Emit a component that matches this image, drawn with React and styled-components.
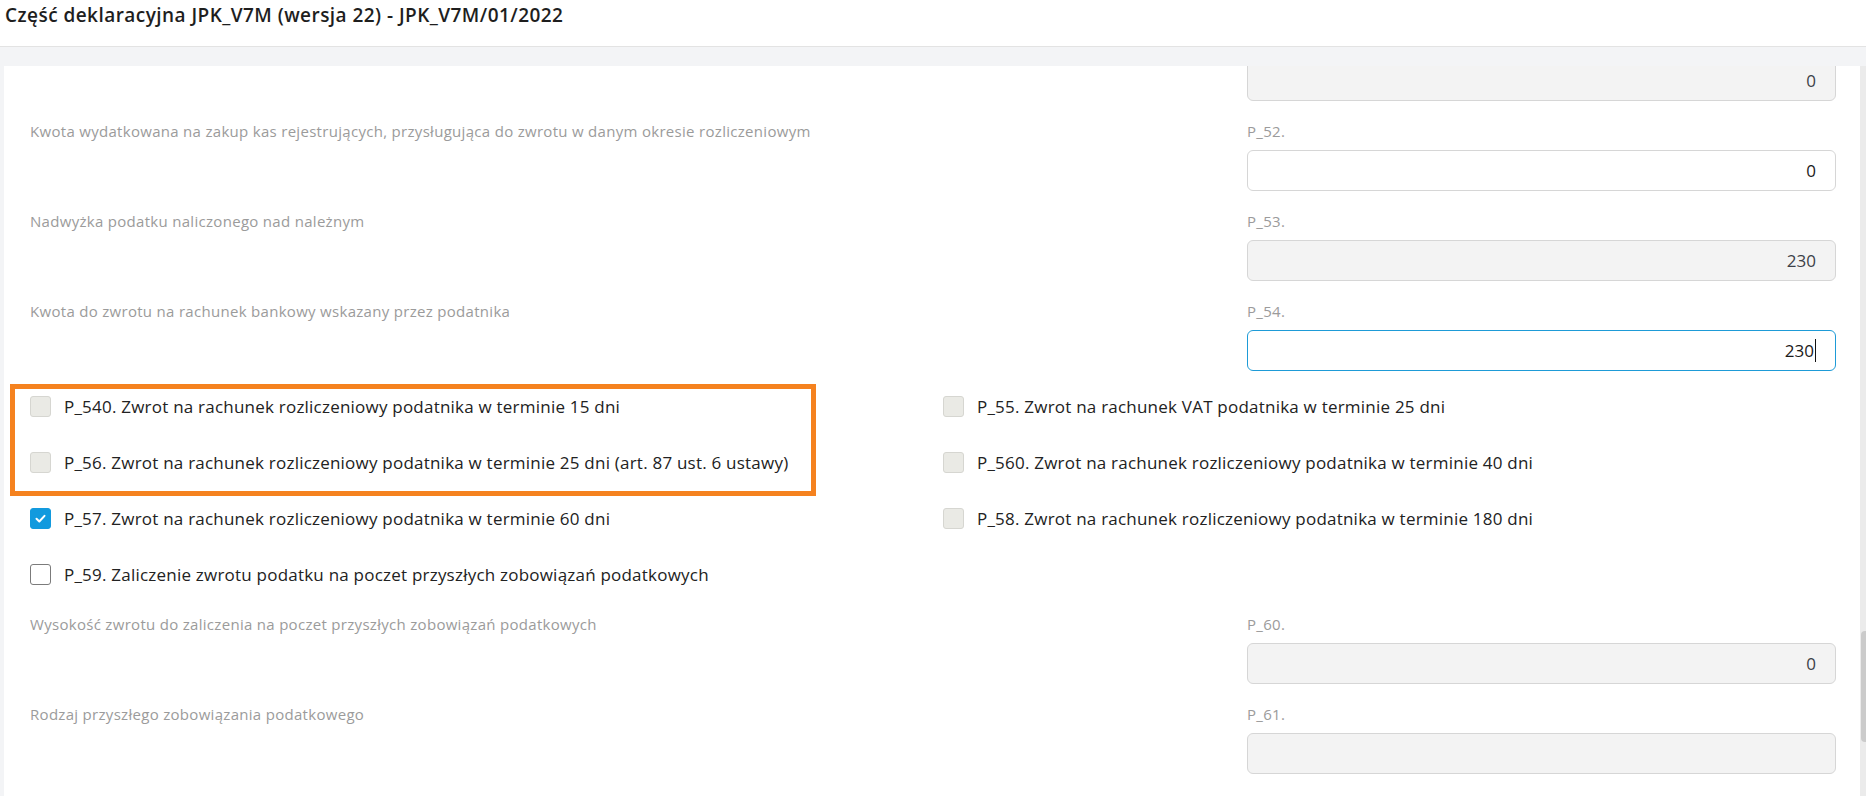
import React, { useLayoutEffect, useRef } from 'react';
import styled, { createGlobalStyle } from 'styled-components';

const GlobalStyle = createGlobalStyle`
    html, body {
        margin: 0;
        padding: 0;
        height: 100%;
    }
    body {
        font-family: "Open Sans", "Noto Sans", sans-serif;
        color: #222;
        background: #fff;
    }
    #root {
        height: 100%;
    }
`

const Page = styled.div`
    height: 100vh;
    display: flex;
    flex-direction: column;
    overflow: hidden;
`

const Header = styled.header`
    height: 47px;
    flex-shrink: 0;
    box-sizing: border-box;
    border-bottom: 1px solid #e3e3e3;
    padding: 3px 0 0 5px;
`

const Title = styled.h1`
    margin: 0;
    font-size: 19px;
    line-height: 25px;
    font-weight: 600;
    letter-spacing: 0.45px;
    color: #1e1e1e;
`

const Body = styled.div`
    flex: 1;
    min-height: 0;
    display: flex;
    background: #f3f4f6;
    padding: 19px 0 0 4px;
`

const Card = styled.div`
    flex: 1;
    min-width: 0;
    background: #fff;
    overflow: hidden;
`

const Content = styled.div`
    padding: 20px 24px 40px 26px;
`

const ScrollTrack = styled.div`
    width: 6px;
    flex-shrink: 0;
    background: #ebebeb;
`

const ScrollThumb = styled.div`
    margin: 565px 0 0 1px;
    height: 111px;
    border-radius: 4px 0 0 4px;
    background: #cbcbcb;
`

const FieldRow = styled.div`
    display: grid;
    grid-template-columns: 2fr 1fr;
    column-gap: 39px;
    margin-bottom: 20px;
`

const Hint = styled.div`
    font-size: 15px;
    line-height: 20px;
    letter-spacing: 0.3px;
    color: #9b9b9b;
    min-height: 20px;
`

const FieldCol = styled.div`
    display: flex;
    flex-direction: column;
    gap: 9px;
`

const ValueBox = styled.div`
    height: 41px;
    box-sizing: border-box;
    display: flex;
    align-items: center;
    justify-content: flex-end;
    padding: 0 19px;
    border-radius: 6px;
    border: 1px solid ${p => (p.$focused ? '#1e9bd7' : '#d6d6d6')};
    background: ${p => (p.$disabled ? '#f3f3f3' : '#fff')};
    color: ${p => (p.$disabled ? '#3c3f48' : '#1a1a1a')};
    font-size: 17px;
`

const Caret = styled.span`
    display: inline-block;
    width: 1px;
    height: 23px;
    margin-left: 1px;
    background: #111;
`

const CheckGrid = styled.div`
    position: relative;
    display: grid;
    grid-template-columns: 1fr 1fr;
    column-gap: 20px;
    row-gap: 32px;
    margin: 23px 0 28px;
`

const Highlight = styled.div`
    position: absolute;
    top: -10px;
    left: -20px;
    width: 806px;
    height: 112px;
    box-sizing: border-box;
    border: 5px solid #f5821f;
    pointer-events: none;
`

const CheckItem = styled.label`
    display: flex;
    align-items: center;
    gap: 13px;
    height: 24px;
    font-size: 17px;
    letter-spacing: 0.22px;
    color: #222;
    white-space: nowrap;
`

const Box = styled.span`
    width: 21px;
    height: 21px;
    box-sizing: border-box;
    flex-shrink: 0;
    border-radius: 3px;
    display: flex;
    align-items: center;
    justify-content: center;
    background: ${p => (p.$checked ? '#129ade' : p.$disabled ? '#eaeae5' : '#fff')};
    border: 1px solid ${p => (p.$checked ? '#129ade' : p.$disabled ? '#d6d6d1' : '#7b7b7b')};
`

// P_51 sits above the visible part of the form, only its input's bottom shows
const fields = [
    { label: '', code: '', value: '0', disabled: true, id: 'p51' },
    { label: 'Kwota wydatkowana na zakup kas rejestrujących, przysługująca do zwrotu w danym okresie rozliczeniowym', code: 'P_52.', value: '0', id: 'p52' },
    { label: 'Nadwyżka podatku naliczonego nad należnym', code: 'P_53.', value: '230', disabled: true, id: 'p53' },
    { label: 'Kwota do zwrotu na rachunek bankowy wskazany przez podatnika', code: 'P_54.', value: '230', focused: true, id: 'p54' },
]

const checks = [
    { text: 'P_540. Zwrot na rachunek rozliczeniowy podatnika w terminie 15 dni', disabled: true },
    { text: 'P_55. Zwrot na rachunek VAT podatnika w terminie 25 dni', disabled: true },
    { text: 'P_56. Zwrot na rachunek rozliczeniowy podatnika w terminie 25 dni (art. 87 ust. 6 ustawy)', disabled: true },
    { text: 'P_560. Zwrot na rachunek rozliczeniowy podatnika w terminie 40 dni', disabled: true },
    { text: 'P_57. Zwrot na rachunek rozliczeniowy podatnika w terminie 60 dni', checked: true },
    { text: 'P_58. Zwrot na rachunek rozliczeniowy podatnika w terminie 180 dni', disabled: true },
    { text: 'P_59. Zaliczenie zwrotu podatku na poczet przyszłych zobowiązań podatkowych' },
]

const moreFields = [
    { label: 'Wysokość zwrotu do zaliczenia na poczet przyszłych zobowiązań podatkowych', code: 'P_60.', value: '0', disabled: true, id: 'p60' },
    { label: 'Rodzaj przyszłego zobowiązania podatkowego', code: 'P_61.', value: '', disabled: true, id: 'p61' },
]

const Field = ({ field }) => (
    <FieldRow>
        <Hint>{field.label}</Hint>
        <FieldCol>
            <Hint>{field.code}</Hint>
            <ValueBox $disabled={field.disabled} $focused={field.focused}>
                {field.value}
                {field.focused && <Caret />}
            </ValueBox>
        </FieldCol>
    </FieldRow>
)

const Check = ({ item }) => (
    <CheckItem>
        <Box $checked={item.checked} $disabled={item.disabled}>
            {item.checked && (
                <svg width="13" height="13" viewBox="0 0 13 13">
                    <polyline points="2.5,6.8 5.3,9.5 10.5,3.8" fill="none" stroke="#fff" strokeWidth="2" strokeLinecap="round" strokeLinejoin="round" />
                </svg>
            )}
        </Box>
        <span>{item.text}</span>
    </CheckItem>
)

const App = () => {
    const cardRef = useRef(null);

    // the form is shown scrolled down
    useLayoutEffect(() => {
        if (cardRef.current) cardRef.current.scrollTop = 55;
    }, []);

    return (
        <Page>
            <GlobalStyle />
            <Header>
                <Title>Część deklaracyjna JPK_V7M (wersja 22) - JPK_V7M/01/2022</Title>
            </Header>
            <Body>
                <Card ref={cardRef}>
                    <Content>
                        {fields.map(f => <Field key={f.id} field={f} />)}
                        <CheckGrid>
                            <Highlight />
                            {checks.map(c => <Check key={c.text} item={c} />)}
                        </CheckGrid>
                        {moreFields.map(f => <Field key={f.id} field={f} />)}
                    </Content>
                </Card>
                <ScrollTrack>
                    <ScrollThumb />
                </ScrollTrack>
            </Body>
        </Page>
    )
}

export default App
